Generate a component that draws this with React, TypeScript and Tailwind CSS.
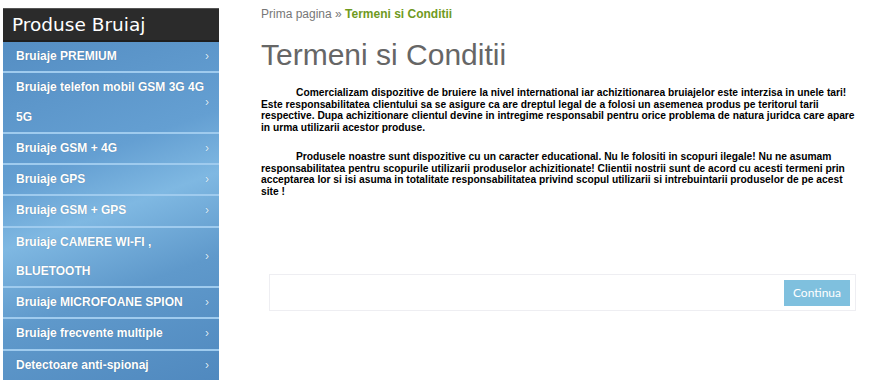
import React from "react";

type MenuItem = {
  label: string[];
};

const menu: Array<MenuItem> = [
  { label: ["Bruiaje PREMIUM"] },
  { label: ["Bruiaje telefon mobil GSM 3G 4G", "5G"] },
  { label: ["Bruiaje GSM + 4G"] },
  { label: ["Bruiaje GPS"] },
  { label: ["Bruiaje GSM + GPS"] },
  { label: ["Bruiaje CAMERE WI-FI ,", "BLUETOOTH"] },
  { label: ["Bruiaje MICROFOANE SPION"] },
  { label: ["Bruiaje frecvente multiple"] },
  { label: ["Detectoare anti-spionaj"] },
];

const Sidebar = () => {
  return (
    <div className="w-[216px] shrink-0">
      <div className="h-[34px] bg-[#2b2b2b] pl-[9px] flex items-center text-white text-[18.5px] font-['DejaVu_Sans',sans-serif] border-t border-[#555] border-b-2 border-b-[#1e1e1e]">
        Produse Bruiaj
      </div>
      <ul className="bg-[linear-gradient(160deg,#558ec3_0%,#649fd2_35%,#7fb8e2_50%,#5f99cb_70%,#5089bf_100%)]">
        {menu.map((item, idx) => (
          <li
            key={idx}
            className="flex items-center justify-between border-b-2 border-[#9fcbee] last:border-b-0 pl-[13px] pr-[10px] text-white font-bold text-[12px] leading-[29.25px] font-['Liberation_Sans',Arial,sans-serif] [text-shadow:0_0_1px_rgba(0,0,0,0.25)]"
          >
            <div>
              {item.label.map((l, i) => (
                <div key={i}>{l}</div>
              ))}
            </div>
            <span className="text-[#dbeeff] text-[12px] font-normal">›</span>
          </li>
        ))}
      </ul>
    </div>
  );
};

const App = () => {
  return (
    <div className="w-[870px] h-[384px] overflow-hidden bg-white flex pl-[3px] pt-[8px] font-['Liberation_Sans',Arial,sans-serif]">
      <Sidebar />
      <div className="ml-[42px] w-[596px] -mt-[8px]">
        <div className="pt-[7px] text-[12px] leading-[14px]">
          <span className="text-[#777]">Prima pagina » </span>
          <span className="text-[#6f9a1e] font-bold">Termeni si Conditii</span>
        </div>
        <h1 className="mt-[17px] text-[30px] leading-[34px] text-[#666] font-normal">
          Termeni si Conditii
        </h1>
        <div className="mt-[15px] text-[10.25px] leading-[11.5px] font-bold text-black">
          <p className="indent-[35px]">
            Comercializam dispozitive de bruiere la nivel international iar achizitionarea bruiajelor este interzisa in unele tari! Este responsabilitatea clientului sa se asigure ca are dreptul legal de a folosi un asemenea produs pe teritorul tarii respective. Dupa achizitionare clientul devine in intregime responsabil pentru orice problema de natura juridca care apare in urma utilizarii acestor produse.
          </p>
          <p className="indent-[35px] mt-[18px]">
            Produsele noastre sunt dispozitive cu un caracter educational. Nu le folositi in scopuri ilegale! Nu ne asumam responsabilitatea pentru scopurile utilizarii produselor achizitionate! Clientii nostrii sunt de acord cu acesti termeni prin acceptarea lor si isi asuma in totalitate responsabilitatea privind scopul utilizarii si intrebuintarii produselor de pe acest site !
          </p>
        </div>
        <div className="mt-[77px] ml-[8px] w-[587px] h-[37px] border border-[#eeeef2] flex items-center justify-end pr-[5px]">
          <button className="h-[26px] w-[66px] bg-[#7fc0de] text-white text-[12px] font-['Lato',sans-serif]">
            Continua
          </button>
        </div>
      </div>
    </div>
  );
};

export default App;
